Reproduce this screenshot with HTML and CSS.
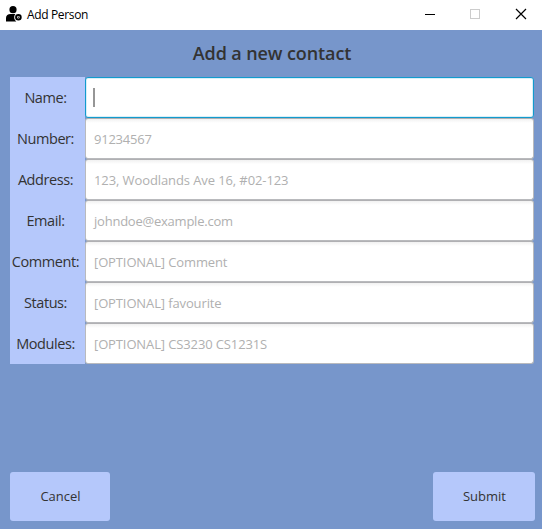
FILE: index.html
```html
<!DOCTYPE html>
<html lang="en">
<head>
<meta charset="utf-8">
<title>Add Person</title>
<link rel="stylesheet" href="styles.css">
</head>
<body>
<header class="titlebar">
  <svg class="app-icon" width="16" height="16" viewBox="0 0 16 16"><circle cx="7" cy="3.7" r="3.6"/><path d="M0 15.5V12C0 9.5 2 8 4.5 8H9.3Q7.8 10 8.2 12.2Q8.6 14 10.3 15.5Z"/><circle cx="12.4" cy="11.2" r="2.3" fill="#fff" stroke="#000" stroke-width="2"/><circle cx="12.4" cy="11.2" r=".6"/></svg>
  <span class="window-title">Add Person</span>
  <div class="controls">
    <svg width="45" height="30" viewBox="0 0 45 30"><path d="M17 14.5h10" stroke="#000"/></svg>
    <svg width="46" height="30" viewBox="0 0 46 30"><rect x="17.5" y="9.5" width="9" height="9" fill="none" stroke="#ccc"/></svg>
    <svg width="46" height="30" viewBox="0 0 46 30"><path d="M17 9l10 10M27 9l-10 10" stroke="#000" stroke-width="1.2"/></svg>
  </div>
</header>
<main class="dialog">
  <h1 class="heading">Add a new contact</h1>
  <div class="form">
    <div class="labels">
      <label class="label">Name:</label>
      <label class="label">Number:</label>
      <label class="label">Address:</label>
      <label class="label">Email:</label>
      <label class="label">Comment:</label>
      <label class="label">Status:</label>
      <label class="label">Modules:</label>
    </div>
    <div class="fields">
      <div class="field focused"><span class="caret"></span></div>
      <div class="field"><span class="prompt">91234567</span></div>
      <div class="field"><span class="prompt address">123, Woodlands Ave 16, #02-123</span></div>
      <div class="field"><span class="prompt">johndoe@example.com</span></div>
      <div class="field"><span class="prompt optional">[OPTIONAL] Comment</span></div>
      <div class="field"><span class="prompt optional">[OPTIONAL] favourite</span></div>
      <div class="field"><span class="prompt optional">[OPTIONAL] CS3230 CS1231S</span></div>
    </div>
  </div>
  <footer class="actions">
    <button class="button">Cancel</button>
    <button class="button submit">Submit</button>
  </footer>
</main>
</body>
</html>
```
FILE: styles.css
```css
* { box-sizing: border-box; }
body {
  margin: 0;
  height: 529px;
  display: flex;
  flex-direction: column;
  overflow: hidden;
  font-family: "Open Sans", "Noto Sans", sans-serif;
  color: #333;
}
.titlebar {
  height: 30px;
  flex: none;
  display: flex;
  align-items: center;
  padding-left: 6px;
  background: #fff;
}
.app-icon { margin-top: -2px; }
.window-title {
  margin-left: 5px;
  margin-top: -1px;
  font-size: 12px;
  letter-spacing: -0.35px;
  color: #000;
}
.controls { display: flex; margin-left: auto; margin-right: -3px; }
.dialog {
  flex: 1;
  display: flex;
  flex-direction: column;
  padding: 0 8px 8px 10px;
  background: #7796cb;
}
.heading {
  margin: 0;
  height: 47px;
  line-height: 47px;
  text-align: center;
  font-size: 18px;
  font-weight: 600;
  letter-spacing: -0.1px;
}
.form { display: flex; height: 287px; }
.labels { width: 75px; background: #b5c8fb; }
.label {
  display: flex;
  justify-content: center;
  align-items: center;
  height: 41px;
  margin: 0 -4px;
  padding-right: 4px;
  font-size: 14.5px;
  letter-spacing: -0.42px;
}
.fields { flex: 1; }
.field {
  height: 41px;
  display: flex;
  align-items: center;
  padding-left: 8px;
  border: 1px solid #b9babd;
  border-top-color: #b0b0b3;
  border-radius: 3px;
  background: linear-gradient(#f1f1f1, #fff 4px);
}
.focused {
  padding-left: 7px;
  border-color: #129bce;
  background: #fff;
  box-shadow: inset 0 0 0 1px #d9eff7;
}
.caret { width: 2px; height: 19px; background: #969696; }
.prompt { font-size: 13px; letter-spacing: -0.23px; color: #b0b0b0; }
.address { letter-spacing: -0.1px; }
.optional { letter-spacing: -0.12px; }
.actions {
  display: flex;
  justify-content: space-between;
  margin-top: auto;
  margin-right: -1px;
}
.button {
  width: 100px;
  height: 49px;
  padding: 0 0 2px 1px;
  border: 0;
  border-radius: 3px;
  background: #b5c8fb;
  color: #333;
  font: 13px "Open Sans", "Noto Sans", sans-serif;
}
.submit { width: 102px; }
```
